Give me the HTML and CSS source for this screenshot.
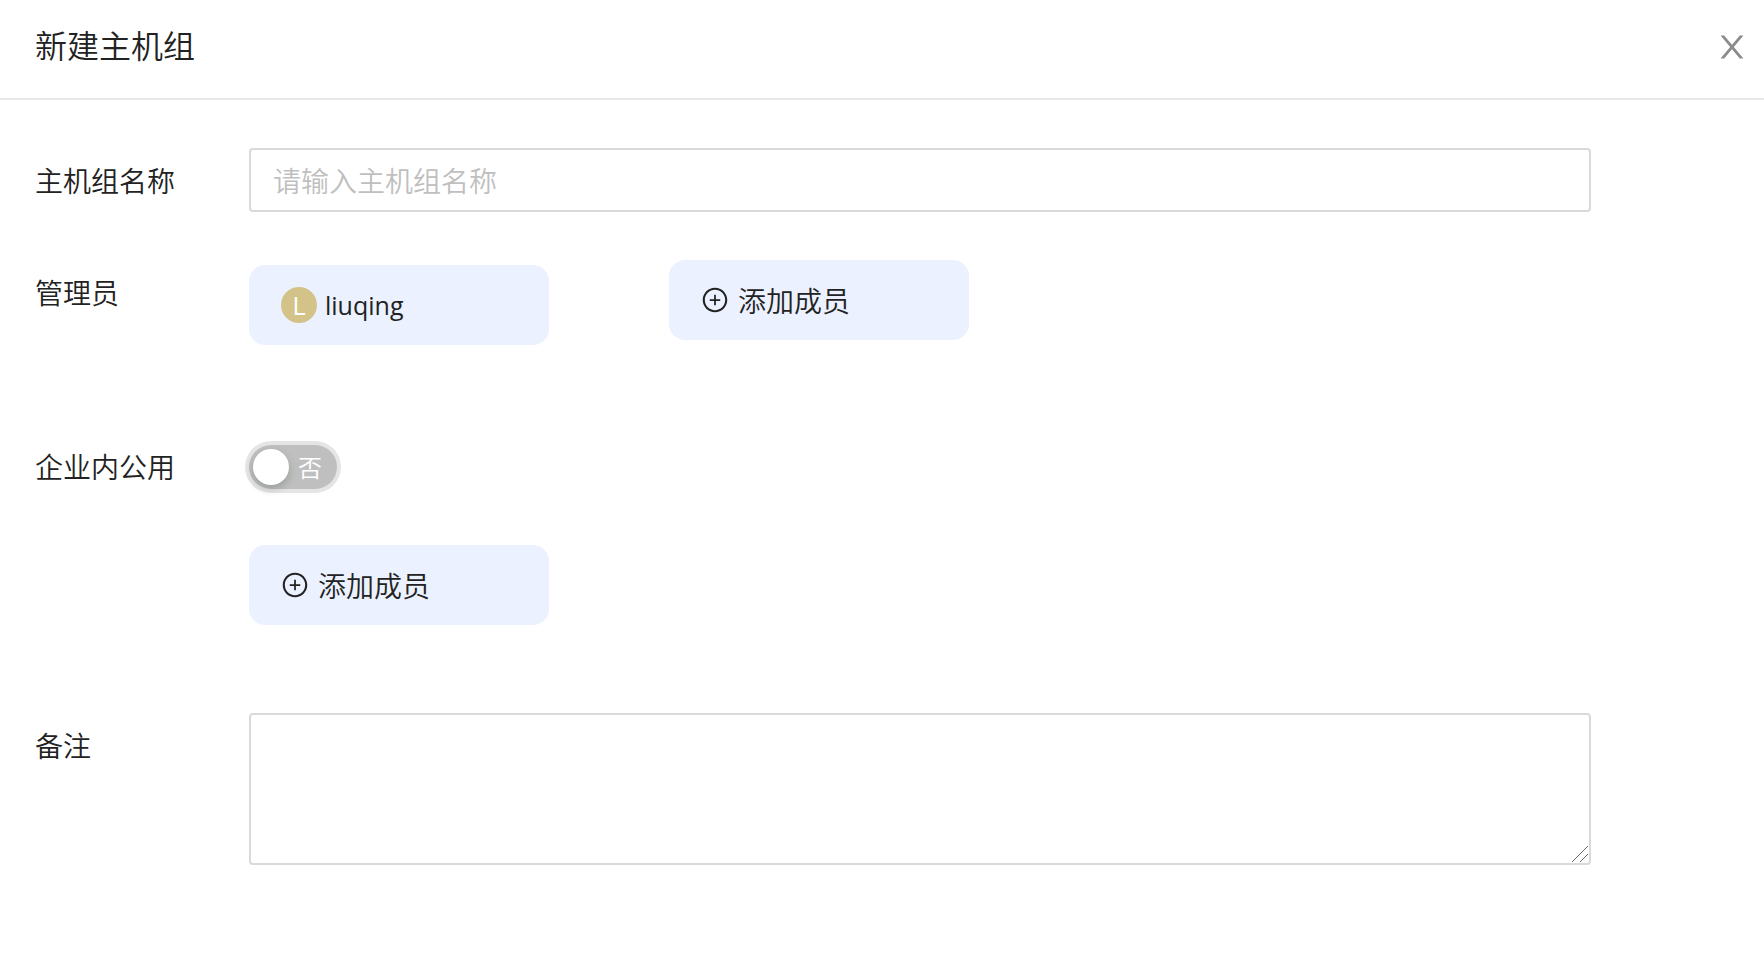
FILE: index.html
```html
<!DOCTYPE html>
<html lang="zh-CN">
<head>
<meta charset="utf-8">
<meta name="viewport" content="width=device-width, initial-scale=1">
<title>新建主机组</title>
<link rel="stylesheet" href="styles.css">
</head>
<body>
<svg class="sprite" aria-hidden="true">
  <symbol id="plus-circle" viewBox="0 0 1024 1024">
    <path d="M696 480H544V328c0-4.400-3.600-8-8-8h-48c-4.400 0-8 3.600-8 8v152H328c-4.400 0-8 3.600-8 8v48c0 4.400 3.600 8 8 8h152v152c0 4.400 3.600 8 8 8h48c4.400 0 8-3.600 8-8V544h152c4.400 0 8-3.600 8-8v-48c0-4.400-3.600-8-8-8z"/>
    <path d="M512 64C264.600 64 64 264.600 64 512s200.600 448 448 448 448-200.600 448-448S759.400 64 512 64zm0 820c-205.400 0-372-166.600-372-372s166.600-372 372-372 372 166.600 372 372-166.600 372-372 372z"/>
  </symbol>
</svg>
<header class="header">
  <h1 class="title">新建主机组</h1>
  <button class="close" type="button" aria-label="关闭">
    <svg viewBox="0 0 1024 1024" aria-hidden="true"><path d="M563.800 512l262.500-312.900c4.400-5.200.7-13.100-6.100-13.100h-79.800c-4.700 0-9.200 2.100-12.300 5.700L511.600 449.800 295.100 191.700c-3-3.600-7.500-5.700-12.300-5.700H203c-6.800 0-10.500 7.900-6.100 13.100L459.400 512 196.900 824.900A7.950 7.950 0 0 0 203 838h79.800c4.700 0 9.200-2.100 12.300-5.700l216.500-258.100 216.500 258.100c3 3.600 7.500 5.700 12.300 5.700h79.800c6.800 0 10.500-7.900 6.100-13.100L563.800 512z"/></svg>
  </button>
</header>
<form class="form">
  <div class="row">
    <label class="label" for="name">主机组名称</label>
    <input class="input" id="name" type="text" placeholder="请输入主机组名称">
  </div>
  <div class="row" role="group" aria-labelledby="admins">
    <span class="label" id="admins">管理员</span>
    <div class="members">
      <div class="chip member"><span class="avatar">L</span><span class="name">liuqing</span></div>
      <button class="chip" type="button"><svg class="icon" aria-hidden="true"><use href="#plus-circle"/></svg>添加成员</button>
    </div>
  </div>
  <div class="row">
    <label class="label" for="shared">企业内公用</label>
    <div class="sharing">
      <div class="switch-line">
        <button class="switch" id="shared" type="button" role="switch" aria-checked="false"><span class="knob"></span><span class="state">否</span></button>
      </div>
      <button class="chip" type="button"><svg class="icon" aria-hidden="true"><use href="#plus-circle"/></svg>添加成员</button>
    </div>
  </div>
  <div class="row">
    <label class="label" for="remark">备注</label>
    <div class="remark">
      <textarea class="textarea" id="remark"></textarea>
      <svg class="grip" viewBox="0 0 16 16" aria-hidden="true"><path d="M0 16L16 0M8 16L16 8"/></svg>
    </div>
  </div>
</form>
</body>
</html>
```
FILE: styles.css
```css
*, *::before, *::after { box-sizing: border-box; }
body {
  margin: 0;
  background: #fff;
  color: #222;
  font: 350 28px/44px "Noto Sans CJK SC DemiLight", "Noto Sans CJK SC", sans-serif;
}
button, input, textarea { font: inherit; color: inherit; }
button { border: 0; padding: 0; background: none; cursor: pointer; }
.sprite { display: none; }
.header {
  display: flex;
  align-items: flex-start;
  justify-content: space-between;
  height: 100px;
  padding: 22px 14px 0 35px;
  border-bottom: 2px solid #e8e8e8;
}
.title { margin: 0; font-size: 32px; font-weight: inherit; line-height: 44px; }
.close { display: flex; align-items: center; height: 50px; }
.close svg { width: 36px; height: 36px; fill: #8c8c8c; }
.form {
  display: flex;
  flex-direction: column;
  gap: 48px;
  padding: 48px 173px 48px 35px;
}
.row { display: grid; grid-template-columns: 214px minmax(0, 1fr); align-items: start; }
.label { line-height: 64px; }
.input, .textarea {
  display: block;
  width: 100%;
  border: 2px solid #d9d9d9;
  border-radius: 4px;
  background: #fff;
  outline: 0;
}
.input { height: 64px; padding: 0 22px; }
.input::placeholder { color: #bfbfbf; font-weight: 400; opacity: 1; }
.members { display: flex; align-items: flex-start; gap: 120px; padding-bottom: 41px; }
.chip {
  display: flex;
  align-items: center;
  gap: 9px;
  width: 300px;
  height: 80px;
  padding: 0 32px;
  border-radius: 16px;
  background: #ebf1fe;
}
.member { gap: 8px; margin-top: 5px; }
.avatar {
  width: 36px;
  height: 36px;
  border-radius: 50%;
  background: #d4c388;
  color: #fff;
  font: 400 25px/36px "Open Sans", "Noto Sans", sans-serif;
  text-align: center;
}
.name { font: 400 25px/36px "Open Sans", "Noto Sans", sans-serif; }
.icon { width: 28px; height: 28px; fill: currentColor; }
.sharing { display: flex; flex-direction: column; gap: 45px; padding-bottom: 40px; }
.switch-line { display: flex; align-items: center; height: 66px; }
.switch {
  display: flex;
  align-items: center;
  gap: 9px;
  width: 88px;
  height: 44px;
  padding: 0 4px;
  border-radius: 22px;
  background: #bfbfbf;
  box-shadow: 0 0 0 4px #e5e5e5;
  color: #fff;
  font-size: 24px;
  font-weight: 400;
}
.knob {
  width: 36px;
  height: 36px;
  border-radius: 50%;
  background: #fff;
  box-shadow: 0 4px 8px rgba(0, 35, 11, 0.2);
}
.remark { position: relative; }
.textarea { height: 152px; padding: 8px 22px; resize: vertical; }
.textarea::-webkit-resizer { display: none; }
.grip {
  position: absolute;
  right: 3px;
  bottom: 3px;
  width: 16px;
  height: 16px;
  fill: none;
  stroke: #666;
  pointer-events: none;
}
```
